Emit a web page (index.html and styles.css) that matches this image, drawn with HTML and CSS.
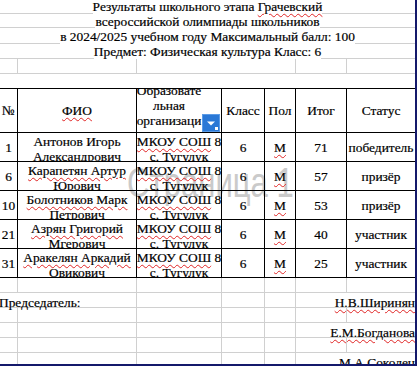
FILE: index.html
```html
<!DOCTYPE html>
<html lang="ru">
<head>
<meta charset="utf-8">
<title>Результаты школьного этапа</title>
<link rel="stylesheet" href="styles.css">
</head>
<body>
<div class="sheet">
  <div class="watermark">Страница 1</div>

  <div class="title">
    <div class="g g1"></div>
    <div class="g g2"></div>
    <div class="g g3"></div>
    <div class="g g4"></div>
    <div class="title-text">
      <span>Результаты школьного этапа <u class="sp">Грачевский</u></span>
      <span>всероссийской олимпиады школьников</span>
      <span>в 2024/2025 учебном году Максимальный балл: 100</span>
      <span>Предмет: Физическая культура Класс: 6</span>
    </div>
  </div>

  <div class="grid-row r5">
    <div class="gc"></div>
    <div class="gc"></div>
    <div class="gc span3"></div>
    <div class="gc"></div>
    <div class="gc"></div>
  </div>
  <div class="blank"></div>

  <div class="table">
    <div class="c h">№</div>
    <div class="c h"><u class="sp">ФИО</u></div>
    <div class="c h org">
      <div class="org-text">Образовате<br>льная<br>организаци</div>
      <span class="filter"><svg width="18" height="18" viewBox="0 0 18 18"><rect x="0" y="0" width="18" height="18" fill="#2a78d6"/><rect x="0.5" y="0.5" width="17" height="17" fill="none" stroke="#5b9be6"/><path d="M5 7.5h8l-4 4z" fill="#fff"/><rect x="13" y="13" width="3" height="3" fill="#fff"/></svg></span>
    </div>
    <div class="c h">Класс</div>
    <div class="c h">Пол</div>
    <div class="c h">Итог</div>
    <div class="c h">Статус</div>

    <div class="c">1</div>
    <div class="c two">Антонов Игорь<br><u class="sp">Александрович</u></div>
    <div class="c two"><span><u class="sp">МКОУ СОШ</u> 8</span><u class="sp">с. Тугулук</u></div>
    <div class="c">6</div>
    <div class="c"><u class="sp">М</u></div>
    <div class="c">71</div>
    <div class="c">победитель</div>

    <div class="c">6</div>
    <div class="c two"><u class="sp">Карапетян Артур</u><u class="sp">Юрович</u></div>
    <div class="c two"><span><u class="sp">МКОУ СОШ</u> 8</span><u class="sp">с. Тугулук</u></div>
    <div class="c">6</div>
    <div class="c"><u class="sp">М</u></div>
    <div class="c">57</div>
    <div class="c">призёр</div>

    <div class="c">10</div>
    <div class="c two"><u class="sp">Болотников Марк</u><u class="sp">Петрович</u></div>
    <div class="c two"><span><u class="sp">МКОУ СОШ</u> 8</span><u class="sp">с. Тугулук</u></div>
    <div class="c">6</div>
    <div class="c"><u class="sp">М</u></div>
    <div class="c">53</div>
    <div class="c">призёр</div>

    <div class="c">21</div>
    <div class="c two"><u class="sp">Азрян Григорий</u><u class="sp">Мгерович</u></div>
    <div class="c two"><span><u class="sp">МКОУ СОШ</u> 8</span><u class="sp">с. Тугулук</u></div>
    <div class="c">6</div>
    <div class="c"><u class="sp">М</u></div>
    <div class="c">40</div>
    <div class="c">участник</div>

    <div class="c">31</div>
    <div class="c two"><u class="sp">Аракелян Аркадий</u><u class="sp">Овикович</u></div>
    <div class="c two"><span><u class="sp">МКОУ СОШ</u> 8</span><u class="sp">с. Тугулук</u></div>
    <div class="c">6</div>
    <div class="c"><u class="sp">М</u></div>
    <div class="c">25</div>
    <div class="c">участник</div>
  </div>

  <div class="foot">
    <div class="f"></div><div class="f"></div><div class="f"></div><div class="f"></div><div class="f"></div><div class="f"></div><div class="f"></div>

    <div class="f span2 left">Председатель:</div><div class="f"></div><div class="f"></div><div class="f"></div><div class="f span2 right"><u class="sp">Н.В.Ширинян</u></div>

    <div class="f"></div><div class="f"></div><div class="f"></div><div class="f"></div><div class="f"></div><div class="f"></div><div class="f"></div>

    <div class="f"></div><div class="f"></div><div class="f"></div><div class="f"></div><div class="f"></div><div class="f span2 right"><u class="sp">Е.М.Богданова</u></div>

    <div class="f"></div><div class="f"></div><div class="f"></div><div class="f"></div><div class="f"></div><div class="f"></div><div class="f"></div>

    <div class="f"></div><div class="f"></div><div class="f"></div><div class="f"></div><div class="f"></div><div class="f span2 right"><u class="sp">М.А.Соколец</u></div>
  </div>
</div>
</body>
</html>
```

FILE: styles.css
```css
* {
  box-sizing: border-box;
  margin: 0;
  padding: 0;
}

html, body {
  background: #fff;
}

body {
  width: 418px;
  height: 367px;
  overflow: hidden;
  font-family: "Liberation Serif", "Times New Roman", serif;
  font-size: 13.4px;
  color: #000;
  -webkit-text-stroke: 0.2px #000;
}

.sheet {
  position: relative;
  width: 417px;
  height: 366px;
  border-right: 2px solid #14196b;
  border-bottom: 2px solid #14196b;
  overflow: hidden;
}

.sp {
  text-decoration: underline wavy #e02525;
  text-decoration-thickness: 1px;
  text-underline-offset: 2px;
}

/* title block */
.title {
  display: grid;
  grid-template-columns: 416px;
}

.g {
  grid-column: 1;
  border-bottom: 1px solid #d0d0d0;
}
.g1 { grid-row: 1; height: 14px; }
.g2 { grid-row: 2; height: 14px; }
.g3 { grid-row: 3; height: 15px; }
.g4 { grid-row: 4; height: 15px; }

.title-text {
  grid-column: 1;
  grid-row: 1 / 5;
  width: 415px;
  margin-top: -1px;
  line-height: 15px;
  position: relative;
  z-index: 1;
}

.title-text span {
  display: block;
  width: fit-content;
  margin: 0 auto;
  background: #fff;
  white-space: nowrap;
}

/* spacer rows */
.grid-row {
  display: grid;
  grid-template-columns: 18px 119px 159px 51px 69px;
  height: 15px;
}

.gc {
  border-right: 1px solid #d0d0d0;
  border-bottom: 1px solid #d0d0d0;
}

.blank {
  height: 14px;
}

/* table */
.table {
  position: relative;
  z-index: 1;
  display: grid;
  grid-template-columns: 18px 119px 85px 43px 31px 51px 69px;
  grid-auto-rows: 29px;
  grid-template-rows: 44px;
  border-top: 1px solid #000;
}

.c {
  border-right: 1px solid #000;
  border-bottom: 1px solid #000;
  display: flex;
  flex-direction: column;
  align-items: center;
  justify-content: center;
  text-align: center;
  line-height: 15px;
  white-space: nowrap;
  overflow: hidden;
}

.c.two {
  justify-content: flex-start;
  padding-top: 1px;
}

.org {
  position: relative;
  justify-content: flex-end;
  padding: 0 20px 4px 0;
}

.filter {
  position: absolute;
  right: 1px;
  bottom: 0;
  width: 18px;
  height: 18px;
  display: block;
}

.filter svg {
  display: block;
}

/* footer */
.foot {
  position: relative;
  z-index: 1;
  display: grid;
  grid-template-columns: 18px 119px 85px 43px 31px 51px 69px;
  grid-template-rows: repeat(5, 15px) 15px;
}

.f {
  border-right: 1px solid #d0d0d0;
  border-bottom: 1px solid #d0d0d0;
  line-height: 15px;
  white-space: nowrap;
  padding-top: 2px;
}

.span2 {
  grid-column: span 2;
}

.left {
  margin-left: -1px;
}

.right {
  text-align: right;
  padding-right: 0;
}

/* page watermark */
.watermark {
  position: absolute;
  left: 127px;
  top: 162px;
  z-index: 0;
  font-family: "Liberation Sans", Arial, sans-serif;
  font-size: 42px;
  line-height: 42px;
  color: #cacaca;
  -webkit-text-stroke: 0;
  white-space: nowrap;
  transform: scaleX(0.74);
  transform-origin: left top;
}
```
